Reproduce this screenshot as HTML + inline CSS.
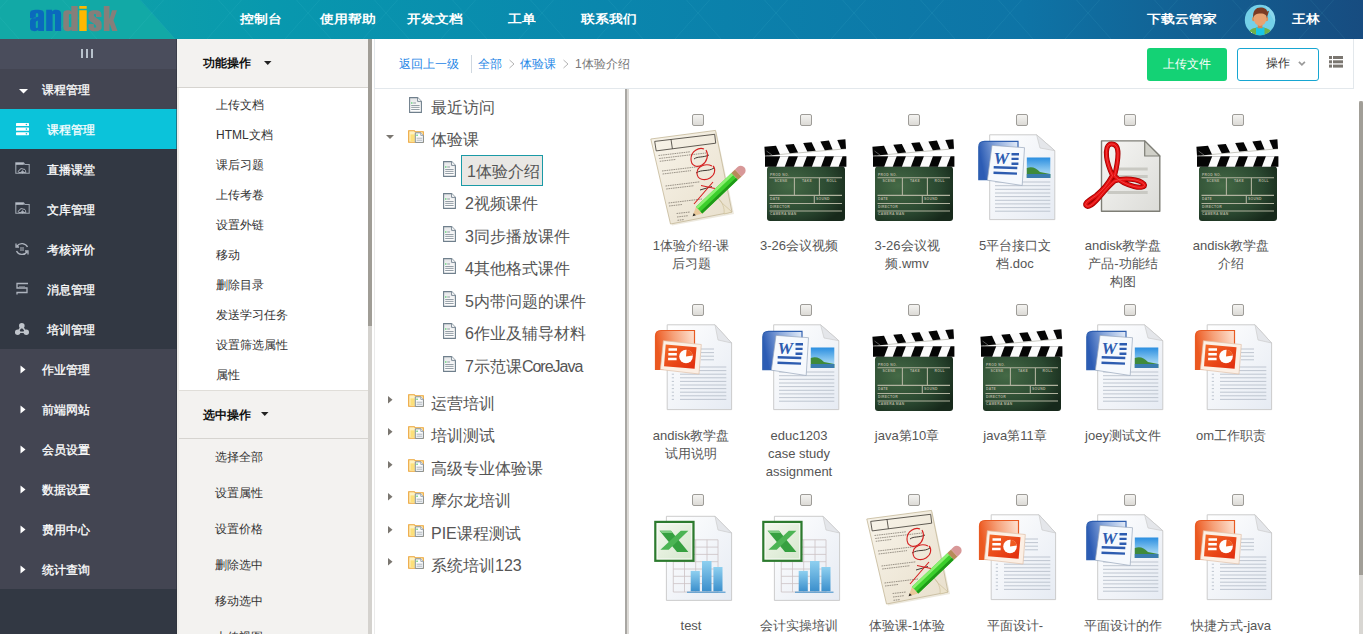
<!DOCTYPE html>
<html><head><meta charset="utf-8">
<style>
*{box-sizing:border-box;margin:0;padding:0}
html,body{width:1363px;height:634px;overflow:hidden;background:#fff;font-family:"Liberation Sans",sans-serif;}
.a{position:absolute}
#hdr{left:0;top:0;width:1363px;height:39px;background:linear-gradient(90deg,#12a6a6 0%,#0898ae 20%,#0a86ad 45%,#0e74a6 75%,#174c80 100%);overflow:hidden}
.nav{position:absolute;top:10px;color:#fff;font-size:14px;font-weight:bold;line-height:18px;white-space:nowrap;transform:scaleY(0.87);transform-origin:50% 50%}
#logo{left:29px;top:0px;font-size:33px;font-weight:bold;letter-spacing:-1px;line-height:39px}
#side{left:0;top:39px;width:177px;height:595px;background:#323843}
.srow{position:absolute;left:0;width:177px;height:40px;color:#fff;font-size:12px;line-height:42px;white-space:nowrap;-webkit-text-stroke:0.3px #fff}
.grp{background:#434552}
#ops{left:177px;top:39px;width:191px;height:595px;background:#fff}
.oph{position:absolute;left:0;width:191px;background:#f3f2f0;border-bottom:1px solid #d6d4d0;font-size:12px;font-weight:bold;color:#111}
.opi{position:absolute;left:39px;font-size:12px;color:#333;white-space:nowrap;line-height:16px}
.tree{position:absolute;font-size:16px;color:#555;white-space:nowrap;line-height:20px}
.ft{position:absolute;font-size:13px;color:#555;text-align:center;line-height:18px;white-space:nowrap;width:100px}
.cb{position:absolute;width:12px;height:12px;border:1px solid #9e9c98;border-radius:2px;background:linear-gradient(#f4f3f1,#dcdad6)}
</style></head><body>
<div id="hdr" class="a">
  <svg class="a" style="left:0;top:0" width="1363" height="39"><path d="M0 0H140L175 39H0Z" fill="#12a9a6"/></svg>
  <svg class="a" style="left:0;top:0" width="1363" height="39"><path d="M-93.5 0L-59.0 39M-70.5 0L-105.0 39M-15.5 0L19.0 39M7.5 0L-27.0 39M62.5 0L97.0 39M85.5 0L51.0 39M140.5 0L175.0 39M163.5 0L129.0 39M218.5 0L253.0 39M241.5 0L207.0 39M296.5 0L331.0 39M319.5 0L285.0 39M374.5 0L409.0 39M397.5 0L363.0 39M452.5 0L487.0 39M475.5 0L441.0 39M530.5 0L565.0 39M553.5 0L519.0 39M608.5 0L643.0 39M631.5 0L597.0 39M686.5 0L721.0 39M709.5 0L675.0 39M764.5 0L799.0 39M787.5 0L753.0 39M842.5 0L877.0 39M865.5 0L831.0 39M920.5 0L955.0 39M943.5 0L909.0 39M998.5 0L1033.0 39M1021.5 0L987.0 39M1076.5 0L1111.0 39M1099.5 0L1065.0 39M1154.5 0L1189.0 39M1177.5 0L1143.0 39M1232.5 0L1267.0 39M1255.5 0L1221.0 39M1310.5 0L1345.0 39M1333.5 0L1299.0 39M1388.5 0L1423.0 39M1411.5 0L1377.0 39" stroke="#7fe0f0" stroke-opacity="0.08" stroke-width="1" fill="none"/></svg>
  <svg class="a" style="left:0;top:0" width="130" height="39" viewBox="0 0 130 39">
    <path fill="#0a69bd" fill-rule="evenodd" d="M30 13.7C30 10.5 32 9.7 37 9.7C42 9.7 44 10.5 44 13.7V31H38.2V29.5C37.5 30.8 36.5 31.2 34.5 31.2C31 31.2 30 29.5 30 26.5V22C30 19.5 31 18.5 34 17.8L38.2 16.8V14.2C38.2 13.5 37.9 13.3 37 13.3C36.1 13.3 35.8 13.5 35.8 14.2V18.2H30Z M35.8 22.5C35.8 21.5 36.5 21 37.9 20.5V27C37.9 27.8 37.5 28 36.8 28C36.1 28 35.8 27.8 35.8 27Z"/>
    <path fill="#0a69bd" d="M46.2 9.7H52V11.5C52.8 10.2 54 9.7 56 9.7C59.5 9.7 61.1 11 61.1 14V31H55V14.5C55 14 54.6 13.9 53.8 13.9C53 13.9 52.6 14 52.6 14.5V31H46.2Z"/>
    <path fill="#857f7a" fill-rule="evenodd" d="M71.3 6.1H77.7V31H71.5V29.5C70.8 30.7 69.8 31.2 68 31.2C64.8 31.2 63.3 30 63.3 27V14C63.3 11 64.8 10.2 68 10.2C69.6 10.2 70.6 10.6 71.3 11.5Z M68.9 14.6C68.9 14.1 69.3 13.9 70.1 13.9C70.9 13.9 71.3 14.1 71.3 14.6V26.6C71.3 27.1 70.9 27.2 70.1 27.2C69.3 27.2 68.9 27.1 68.9 26.6Z"/>
    <path fill="#ffb800" d="M79.3 6.1H86.7V8.7H79.3Z M79.3 10.2H86.7V31H79.3Z"/>
    <path fill="#857f7a" d="M95 10.2C99.8 10.2 101.5 11.8 101.5 15V17H96V14.8C96 14.2 95.6 14 95 14C94.3 14 93.9 14.3 93.9 15C93.9 16 94.5 16.6 96.5 18L99.5 20C101.3 21.3 101.7 22.6 101.7 25V26.5C101.7 29.8 99.8 31.2 95 31.2C90.2 31.2 88.4 29.8 88.4 26.5V24H93.9V26.8C93.9 27.4 94.3 27.6 95 27.6C95.7 27.6 96.2 27.3 96.2 26.7C96.2 25.6 95.5 25 93.5 23.5L90.5 21.5C88.8 20.2 88.4 19 88.4 16.5V15C88.4 11.8 90.2 10.2 95 10.2Z"/>
    <path fill="#857f7a" d="M103.8 6.1H109.5V19L112 10.2H117L113.5 20.3L117.5 31H112.2L109.5 23V31H103.8Z"/>
  </svg>
  <div class="nav" style="left:240px">控制台</div>
  <div class="nav" style="left:320px">使用帮助</div>
  <div class="nav" style="left:407px">开发文档</div>
  <div class="nav" style="left:508px">工单</div>
  <div class="nav" style="left:581px">联系我们</div>
  <div class="nav" style="left:1147px">下载云管家</div>
  <svg class="a" style="left:1244px;top:4px" width="32" height="32" viewBox="0 0 32 32">
    <defs><clipPath id="avc"><circle cx="16" cy="16" r="15.2"/></clipPath></defs>
    <circle cx="16" cy="16" r="15.2" fill="#74d0e8"/>
    <g clip-path="url(#avc)">
      <path d="M20 0 L32 0 V20 Z" fill="#9adcf0" opacity="0.6"/>
      <path d="M3.5 32 C4 26 8 23.5 16 23.5 C24 23.5 28 26 28.5 32Z" fill="#6fb04a"/>
      <path d="M12 23.5 H20.5 V32 H12Z" fill="#19c6e6"/>
      <rect x="13.8" y="19" width="4.6" height="5.2" fill="#d48450"/>
      <ellipse cx="9.6" cy="15" rx="1.6" ry="2.2" fill="#d9925e"/>
      <ellipse cx="22.6" cy="15" rx="1.6" ry="2.2" fill="#d9925e"/>
      <ellipse cx="16.1" cy="14.6" rx="6.4" ry="7.4" fill="#e8a271"/>
      <path d="M9.2 14 C8.5 6.5 12 3.3 16.5 3.4 C20.5 3.5 23 5 23.2 7.5 L25 6.8 C24.6 9 23.6 10.5 23 14.5 C22.5 11 21 9.6 16.5 9.6 C12.5 9.6 10.5 10.5 9.2 14Z" fill="#7b3b24"/>
      <circle cx="7.4" cy="28.6" r="0.7" fill="#fff"/><circle cx="7.9" cy="30.9" r="0.7" fill="#fff"/>
    </g>
  </svg>
  <div class="nav" style="left:1292px">王林</div>
</div>

<div id="side" class="a">
  <div class="srow" style="top:0;height:30px;background:#4a4d5c"></div>
  <div class="a" style="left:81px;top:10px;width:2px;height:9px;background:#b8c2cc"></div>
  <div class="a" style="left:86px;top:10px;width:2px;height:9px;background:#b8c2cc"></div>
  <div class="a" style="left:91px;top:10px;width:2px;height:9px;background:#b8c2cc"></div>
  <div class="srow grp" style="top:30px"><svg class="a" style="left:19px;top:20px" width="9" height="5"><path d="M0 0H9L4.5 4.5Z" fill="#fff"/></svg><span style="position:absolute;left:42px">课程管理</span></div>
  <div class="srow" style="top:70px;background:#0bc3da"><svg class="a" style="left:15px;top:13px" width="15" height="14"><g fill="#fff"><rect x="1" y="1" width="13" height="3" rx="0.6"/><rect x="1" y="5.5" width="13" height="3.3" rx="0.6"/><rect x="1" y="10.2" width="13" height="3" rx="0.6"/></g><g fill="#0bc3da"><circle cx="11.4" cy="2.5" r="0.8"/><circle cx="11.4" cy="7.1" r="0.8"/><circle cx="11.4" cy="11.7" r="0.8"/></g></svg><span style="position:absolute;left:47px">课程管理</span></div>
  <div class="srow" style="top:110px"><svg class="a" style="left:15px;top:13px" width="15" height="13"><path d="M0.8 0.8H8.5L10 2.5H14.2V11.2H0.8Z" fill="none" stroke="#9ea5b0" stroke-width="1.1"/><rect x="0.8" y="0.8" width="8" height="2" fill="#b8bec8"/><path d="M4 10.5 C3 10.5 3 8.2 4.6 8.2 C4.8 6.6 7 6 8 7.2 C9.6 6.8 11 8 10.4 9.5 C11.6 9.7 11.3 10.5 10.6 10.5Z" fill="none" stroke="#b4bac4" stroke-width="0.9"/><path d="M7.5 11.5V8.8M6.2 10L7.5 8.6L8.8 10" fill="none" stroke="#b4bac4" stroke-width="0.8"/></svg><span style="position:absolute;left:47px">直播课堂</span></div>
  <div class="srow" style="top:150px"><svg class="a" style="left:15px;top:13px" width="15" height="13"><path d="M0.8 0.8H8.5L10 2.5H14.2V11.2H0.8Z" fill="none" stroke="#9ea5b0" stroke-width="1.1"/><rect x="0.8" y="0.8" width="8" height="2" fill="#b8bec8"/><path d="M4 10.5 C3 10.5 3 8.2 4.6 8.2 C4.8 6.6 7 6 8 7.2 C9.6 6.8 11 8 10.4 9.5 C11.6 9.7 11.3 10.5 10.6 10.5Z" fill="none" stroke="#b4bac4" stroke-width="0.9"/><path d="M7.5 11.5V8.8M6.2 10L7.5 8.6L8.8 10" fill="none" stroke="#b4bac4" stroke-width="0.8"/></svg><span style="position:absolute;left:47px">文库管理</span></div>
  <div class="srow" style="top:190px"><svg class="a" style="left:15px;top:13px" width="14" height="14"><path d="M2 4A6 5.5 0 0 1 12.5 5M12 10A6 5.5 0 0 1 1.5 9M1 1.5V5H4M13 12.5V9H10" fill="none" stroke="#aeb4be" stroke-width="1.3"/><path d="M5 6H9M5 8H9" stroke="#aeb4be" stroke-width="1"/></svg><span style="position:absolute;left:47px">考核评价</span></div>
  <div class="srow" style="top:230px"><svg class="a" style="left:15px;top:13px" width="14" height="14"><path d="M13 1.5H2V6H12V10.5H2V12.5" fill="none" stroke="#aeb4be" stroke-width="1.3"/><path d="M4.5 4.5H10" stroke="#aeb4be" stroke-width="1" stroke-dasharray="1 1"/></svg><span style="position:absolute;left:47px">消息管理</span></div>
  <div class="srow" style="top:270px"><svg class="a" style="left:15px;top:13px" width="14" height="14"><g fill="#c0c5cc"><circle cx="6.8" cy="3.7" r="2.8"/><circle cx="2.6" cy="10.2" r="2.7"/><circle cx="11.3" cy="10.2" r="2.7"/></g><path d="M6.8 4L2.6 10.2H11.3Z" fill="none" stroke="#c0c5cc" stroke-width="1.5"/></svg><span style="position:absolute;left:47px">培训管理</span></div>
  <div class="srow grp" style="top:310px"><svg class="a" style="left:20px;top:16px" width="6" height="9"><path d="M0.5 0.5V8.5L5.5 4.5Z" fill="#fff"/></svg><span style="position:absolute;left:42px">作业管理</span></div>
  <div class="srow grp" style="top:350px"><svg class="a" style="left:20px;top:16px" width="6" height="9"><path d="M0.5 0.5V8.5L5.5 4.5Z" fill="#fff"/></svg><span style="position:absolute;left:42px">前端网站</span></div>
  <div class="srow grp" style="top:390px"><svg class="a" style="left:20px;top:16px" width="6" height="9"><path d="M0.5 0.5V8.5L5.5 4.5Z" fill="#fff"/></svg><span style="position:absolute;left:42px">会员设置</span></div>
  <div class="srow grp" style="top:430px"><svg class="a" style="left:20px;top:16px" width="6" height="9"><path d="M0.5 0.5V8.5L5.5 4.5Z" fill="#fff"/></svg><span style="position:absolute;left:42px">数据设置</span></div>
  <div class="srow grp" style="top:470px"><svg class="a" style="left:20px;top:16px" width="6" height="9"><path d="M0.5 0.5V8.5L5.5 4.5Z" fill="#fff"/></svg><span style="position:absolute;left:42px">费用中心</span></div>
  <div class="srow grp" style="top:510px"><svg class="a" style="left:20px;top:16px" width="6" height="9"><path d="M0.5 0.5V8.5L5.5 4.5Z" fill="#fff"/></svg><span style="position:absolute;left:42px">统计查询</span></div>
</div>

<div id="ops" class="a">
  <div class="oph" style="top:0;height:49px"><span style="position:absolute;left:26px;top:16px">功能操作</span><svg class="a" style="left:87px;top:22px" width="8" height="5"><path d="M0 0H7.5L3.75 4Z" fill="#222"/></svg></div>
  <div class="opi" style="top:58px">上传文档</div>
  <div class="opi" style="top:88px">HTML文档</div>
  <div class="opi" style="top:118px">课后习题</div>
  <div class="opi" style="top:148px">上传考卷</div>
  <div class="opi" style="top:178px">设置外链</div>
  <div class="opi" style="top:208px">移动</div>
  <div class="opi" style="top:238px">删除目录</div>
  <div class="opi" style="top:268px">发送学习任务</div>
  <div class="opi" style="top:298px">设置筛选属性</div>
  <div class="opi" style="top:328px">属性</div>
  <div class="oph" style="top:351px;height:49px;border-top:1px solid #e0ded9"><span style="position:absolute;left:26px;top:16px">选中操作</span><svg class="a" style="left:84px;top:21px" width="8" height="5"><path d="M0 0H7.5L3.75 4Z" fill="#222"/></svg></div>
  <div class="a" style="left:0;top:400px;width:191px;height:195px;background:#f3f2f0"></div>
  <div class="opi" style="top:410px;left:38px">选择全部</div>
  <div class="opi" style="top:446px;left:38px">设置属性</div>
  <div class="opi" style="top:482px;left:38px">设置价格</div>
  <div class="opi" style="top:518px;left:38px">删除选中</div>
  <div class="opi" style="top:554px;left:38px">移动选中</div>
  <div class="opi" style="top:590px;left:38px">上传视图</div>
</div>
<div class="a" style="left:177px;top:88px;width:2px;height:546px;background:#eeece8"></div>
<div class="a" style="left:176px;top:39px;width:1px;height:595px;background:#2c2f3a;opacity:0.5"></div>
<div class="a" style="left:368px;top:39px;width:4px;height:595px;background:#d4d2ce"></div>
<div class="a" style="left:368px;top:39px;width:4px;height:287px;background:#a09d96"></div>

<!-- breadcrumb -->
<div class="a" style="left:374px;top:39px;width:980px;height:50px;border-left:1px solid #e3e8ec;border-right:1px solid #e3e8ec;border-bottom:1px solid #e3e8ec"></div>
<div class="a" style="left:399px;top:56px;font-size:12px;color:#1e86e6;white-space:nowrap">返回上一级</div>
<div class="a" style="left:471px;top:55px;width:1px;height:18px;background:#d0d8e0"></div>
<div class="a" style="left:478px;top:56px;font-size:12px;color:#1e86e6;white-space:nowrap">全部</div>
<svg class="a" style="left:508px;top:59px" width="8" height="10"><path d="M1.5 1L6 5L1.5 9" fill="none" stroke="#b4b4b4" stroke-width="1"/></svg>
<svg class="a" style="left:562px;top:59px" width="8" height="10"><path d="M1.5 1L6 5L1.5 9" fill="none" stroke="#b4b4b4" stroke-width="1"/></svg>
<div class="a" style="left:520px;top:56px;font-size:12px;color:#1e86e6;white-space:nowrap">体验课</div>
<div class="a" style="left:575px;top:56px;font-size:12px;color:#777;white-space:nowrap">1体验介绍</div>

<div class="a" style="left:1147px;top:48px;width:80px;height:33px;background:#14d275;border-radius:3px;color:#fff;font-size:12px;line-height:33px;text-align:center">上传文件</div>
<div class="a" style="left:1237px;top:48px;width:82px;height:33px;border:1px solid #17a6d2;border-radius:3px;color:#333;font-size:12px;line-height:29px"><span style="position:absolute;left:28px">操作</span><svg class="a" style="left:60px;top:12px" width="8" height="6"><path d="M0.9 0.9L3.9 3.9L6.9 0.9" fill="none" stroke="#999" stroke-width="1.7"/></svg></div>
<svg class="a" style="left:1329px;top:56px" width="14" height="12"><g fill="#7a7670"><rect x="0" y="0" width="3" height="3"/><rect x="4" y="0" width="10" height="3"/><rect x="0" y="4.3" width="3" height="3"/><rect x="4" y="4.3" width="10" height="3"/><rect x="0" y="8.6" width="3" height="3"/><rect x="4" y="8.6" width="10" height="3"/></g></svg>

<!-- tree -->
<svg width="0" height="0" style="position:absolute"><defs>
<linearGradient id="gTd" x1="0" y1="0" x2="0" y2="1"><stop offset="0" stop-color="#e2e4e6"/><stop offset="0.5" stop-color="#f8f8f8"/><stop offset="1" stop-color="#ffffff"/></linearGradient>
<symbol id="tdoc" viewBox="0 0 13 16"><path d="M0.6 0.6H8.6L12.4 4.4V15.4H0.6Z" fill="url(#gTd)" stroke="#6f7f8c" stroke-width="1.1"/><path d="M8.6 0.6V4.4H12.4" fill="#fff" stroke="#6f7f8c" stroke-width="0.9"/><rect x="2.2" y="5.4" width="1.2" height="1.2" fill="#22c040"/><path d="M4.2 6H7M2.2 8.5H10.6M2.2 10.4H10.6M2.2 12.5H10.6" stroke="#7b8892" stroke-width="0.8"/></symbol>
<symbol id="tfold" viewBox="0 0 16 13"><path d="M0.7 0.7H6.3L7.3 1.8H15.3V12.3H0.7Z" fill="#fff2c0" stroke="#eba236" stroke-width="1.1"/><rect x="2.5" y="4.4" width="4.2" height="7" fill="#fde07a"/><path d="M7.3 2.8H12.8L15.4 5.4V12.4H7.3Z" fill="#fbfcfd" stroke="#75838f" stroke-width="0.9"/><path d="M12.8 2.8V5.4H15.4" fill="#fff" stroke="#75838f" stroke-width="0.7"/><rect x="8.5" y="4.6" width="1.1" height="1.3" fill="#22c040"/><path d="M8.6 8.2H14.2M8.6 10.2H14.2" stroke="#8a969e" stroke-width="0.7"/></symbol>
</defs></svg>

<svg class="a" style="left:409px;top:97px" width="13" height="16"><use href="#tdoc"/></svg>
<svg class="a" style="left:408px;top:130px" width="16" height="13"><use href="#tfold"/></svg>
<svg class="a" style="left:386px;top:135px" width="8" height="5"><path d="M0 0H8L4 4Z" fill="#7a7670"/></svg>
<svg class="a" style="left:443px;top:161px" width="13" height="16"><use href="#tdoc"/></svg>
<svg class="a" style="left:443px;top:193px" width="13" height="16"><use href="#tdoc"/></svg>
<svg class="a" style="left:443px;top:226px" width="13" height="16"><use href="#tdoc"/></svg>
<svg class="a" style="left:443px;top:258px" width="13" height="16"><use href="#tdoc"/></svg>
<svg class="a" style="left:443px;top:291px" width="13" height="16"><use href="#tdoc"/></svg>
<svg class="a" style="left:443px;top:323px" width="13" height="16"><use href="#tdoc"/></svg>
<svg class="a" style="left:443px;top:356px" width="13" height="16"><use href="#tdoc"/></svg>
<svg class="a" style="left:408px;top:394px" width="16" height="13"><use href="#tfold"/></svg>
<svg class="a" style="left:388px;top:396px" width="5" height="8"><path d="M0 0V7.5L4.5 3.75Z" fill="#7a7670"/></svg>
<svg class="a" style="left:408px;top:426px" width="16" height="13"><use href="#tfold"/></svg>
<svg class="a" style="left:388px;top:428px" width="5" height="8"><path d="M0 0V7.5L4.5 3.75Z" fill="#7a7670"/></svg>
<svg class="a" style="left:408px;top:459px" width="16" height="13"><use href="#tfold"/></svg>
<svg class="a" style="left:388px;top:461px" width="5" height="8"><path d="M0 0V7.5L4.5 3.75Z" fill="#7a7670"/></svg>
<svg class="a" style="left:408px;top:491px" width="16" height="13"><use href="#tfold"/></svg>
<svg class="a" style="left:388px;top:493px" width="5" height="8"><path d="M0 0V7.5L4.5 3.75Z" fill="#7a7670"/></svg>
<svg class="a" style="left:408px;top:524px" width="16" height="13"><use href="#tfold"/></svg>
<svg class="a" style="left:388px;top:526px" width="5" height="8"><path d="M0 0V7.5L4.5 3.75Z" fill="#7a7670"/></svg>
<svg class="a" style="left:408px;top:556px" width="16" height="13"><use href="#tfold"/></svg>
<svg class="a" style="left:388px;top:558px" width="5" height="8"><path d="M0 0V7.5L4.5 3.75Z" fill="#7a7670"/></svg>
<div class="tree" style="left:431px;top:98px">最近访问</div>
<div class="tree" style="left:431px;top:130px">体验课</div>
<div class="a" style="left:461px;top:155px;width:82px;height:31px;border:1px solid #1a9aa6;background:#e9e7e4"></div>
<div class="tree" style="left:467px;top:162px">1体验介绍</div>
<div class="tree" style="left:465px;top:194px">2视频课件</div>
<div class="tree" style="left:465px;top:227px">3同步播放课件</div>
<div class="tree" style="left:465px;top:259px">4其他格式课件</div>
<div class="tree" style="left:465px;top:292px">5内带问题的课件</div>
<div class="tree" style="left:465px;top:324px">6作业及辅导材料</div>
<div class="tree" style="left:465px;top:357px">7示范课<span style="letter-spacing:-1px">CoreJava</span></div>
<div class="tree" style="left:431px;top:394px">运营培训</div>
<div class="tree" style="left:431px;top:426px">培训测试</div>
<div class="tree" style="left:431px;top:459px">高级专业体验课</div>
<div class="tree" style="left:431px;top:491px">摩尔龙培训</div>
<div class="tree" style="left:431px;top:524px">PIE课程测试</div>
<div class="tree" style="left:431px;top:556px">系统培训123</div>

<div class="a" style="left:374px;top:89px;width:1px;height:545px;background:#ebebeb"></div>
<div class="a" style="left:625px;top:89px;width:2px;height:545px;background:#a9a7a3"></div>
<div class="a" style="left:627px;top:89px;width:2px;height:545px;background:#dcdad6"></div>
<div class="a" style="left:1359px;top:101px;width:4px;height:533px;background:#d8d6d2"></div>
<div class="a" style="left:1359px;top:101px;width:4px;height:474px;background:#a19e97;border-radius:2px 2px 0 0"></div>

<svg width="0" height="0" style="position:absolute">
<defs>
<linearGradient id="gPage" x1="0" y1="0" x2="1" y2="1"><stop offset="0" stop-color="#ffffff"/><stop offset="1" stop-color="#e6ebf3"/></linearGradient>
<linearGradient id="gBlue" x1="0" y1="0.2" x2="1" y2="0"><stop offset="0" stop-color="#2c5cb4"/><stop offset="0.45" stop-color="#8aa8dc"/><stop offset="1" stop-color="#e4ecf8"/></linearGradient>
<linearGradient id="gOr" x1="0" y1="0.2" x2="1" y2="0"><stop offset="0" stop-color="#ec5820"/><stop offset="0.45" stop-color="#f6a078"/><stop offset="1" stop-color="#fde4d4"/></linearGradient>
<linearGradient id="gOrIn" x1="0" y1="0" x2="1" y2="1"><stop offset="0" stop-color="#f46a28"/><stop offset="1" stop-color="#e02a0c"/></linearGradient>
<linearGradient id="gSky" x1="0" y1="0" x2="0" y2="1"><stop offset="0" stop-color="#2a8ee0"/><stop offset="1" stop-color="#c8ecfa"/></linearGradient>
<linearGradient id="gBar" x1="0" y1="0" x2="0" y2="1"><stop offset="0" stop-color="#8fd0f0"/><stop offset="1" stop-color="#3b8fcc"/></linearGradient>
<linearGradient id="gXl" x1="0" y1="0" x2="1" y2="1"><stop offset="0" stop-color="#f4f8ee"/><stop offset="1" stop-color="#d4e6cc"/></linearGradient>
<linearGradient id="gPdf" x1="0" y1="0" x2="1" y2="1"><stop offset="0" stop-color="#f6f6f4"/><stop offset="1" stop-color="#dcdcd8"/></linearGradient>
<radialGradient id="gBoard" cx="0.3" cy="0.35" r="0.8"><stop offset="0" stop-color="#456a46"/><stop offset="0.65" stop-color="#2a4830"/><stop offset="1" stop-color="#17291b"/></radialGradient>
<linearGradient id="gPaper" x1="0" y1="0" x2="1" y2="1"><stop offset="0" stop-color="#f8f4ea"/><stop offset="1" stop-color="#e8dfcc"/></linearGradient>

<symbol id="i-clap" viewBox="0 0 96 96">
  <rect x="13" y="38.5" width="78" height="54.5" rx="3" fill="url(#gBoard)"/>
  <g stroke="#b0b29e" stroke-width="1.1" fill="none">
    <path d="M15.5 49.7H88M15.5 67.4H88M15.5 75.5H88M15.5 83H88M40.4 49.7V67.4M65.4 49.7V67.4M60.3 67.4V75.5"/>
  </g>
  <g fill="#aeb09c" font-family="Liberation Sans" font-size="3.4" font-weight="bold" letter-spacing="0.3">
    <text x="16" y="47.5">PROD NO.</text><text x="20.5" y="54">SCENE</text><text x="48" y="54">TAKE</text><text x="72.5" y="54">ROLL</text>
    <text x="16" y="71.8">DATE</text><text x="62" y="71.8">SOUND</text><text x="16" y="79.6">DIRECTOR</text><text x="16" y="87.3">CAMERA MAN</text>
  </g>
  <path d="M11 28.3 H92.4 V38.7 H11Z" fill="#050505"/>
  <g fill="#fbfbfb">
    <path d="M22.2 38.7 L26.2 28.3 H34.7 L30.7 38.7Z"/><path d="M39.9 38.7 L43.9 28.3 H52.9 L48.9 38.7Z"/><path d="M57.9 38.7 L61.9 28.3 H71 L67 38.7Z"/><path d="M75.9 38.7 L79.9 28.3 H88.6 L84.6 38.7Z"/>
  </g>
  <path d="M10.4 18.8 L91.4 11.4 L92 20.8 L11 27.8Z" fill="#fbfbfb"/>
  <path d="M14 27.5 L92 20.8" stroke="#c8c8c0" stroke-width="1"/>
  <g fill="#050505">
    <path d="M10.4 18.8 L22 17.8 L26 26.5 L11 27.8Z"/>
    <path d="M31.3 16.8 L39.8 16 L44.1 24.4 L35.7 25.2Z"/>
    <path d="M49.2 15.1 L57.6 14.3 L61.7 22.7 L53.3 23.5Z"/>
    <path d="M66.4 13.4 L74.9 12.6 L78.6 21.4 L70.8 22.2Z"/>
    <path d="M83.3 12 L91.4 11.3 L92 20.8 L87 21.1Z"/>
  </g>
  <path d="M12.5 23 L18 27" stroke="#555" stroke-width="1"/>
</symbol>

<symbol id="i-exam" viewBox="0 0 96 96" overflow="visible">
  <path d="M6 12.5 L70.5 4 L88 86 L26 97.5Z" fill="#d8ceb6" opacity="0.45"/>
  <path d="M4.8 11 L69.5 2.4 L86 84 L24.5 96Z" fill="url(#gPaper)" stroke="#c4b898" stroke-width="0.8"/>
  <path d="M72 70 C76 76 82 80 86 84 L78 86 C79 80 76 74 72 70Z" fill="#ebe2ca" stroke="#c8ba94" stroke-width="0.6"/>
  <path d="M8.7 13.4 L68.7 6.3 L69.7 15.2 L10.2 22.9Z M25 11.4 L26.4 20.8" fill="none" stroke="#3a3630" stroke-width="0.8"/>
  <g stroke="#6a6258" stroke-width="0.8" stroke-dasharray="1.6 0.7" opacity="0.8">
    <path d="M12.5 27.5 L44 23.8 M13.2 30.5 L60 25 M13.8 33.3 L30 31.4"/>
    <path d="M16 43 L54 38.5 M16.6 46 L45 42.6"/>
    <path d="M19.5 58 L54 53.8 M20.2 61 L48 57.7"/>
    <path d="M22.5 75 L56 71 M23 78 L36 76.5"/>
    <path d="M30.6 85.5 L44 84 M31 89 L42 87.7 M31.5 92.3 L38 91.6"/>
  </g>
  <g stroke="#403a34" stroke-width="1" fill="none">
    <path d="M48 31 C52 28 56 30 63 27"/><path d="M50 45 C56 41 62 44 68 40"/><path d="M54 62 L66 58.5"/>
  </g>
  <g fill="none" stroke="#d42020" stroke-width="1.1">
    <path d="M58 21 C53 19 45 23 45 31 C45 38 51 40 56 37 C61 34 63 27 60 22"/>
    <path d="M66 38 C60 35 51 38 51 45 C51 52 59 53 64 50 C69 47 70 41 67 38"/>
    <path d="M55 57.5 L69 60.5 M67 54 L48 76"/>
  </g>
  <g transform="translate(46.6,88.3) rotate(-43.5)">
    <path d="M0 0 L9 -4.6 V4.6Z" fill="#e9c89a"/>
    <path d="M0 0 L3 -1.5 V1.5Z" fill="#222"/>
    <rect x="9" y="-4.6" width="49" height="9.2" fill="#3ccf2c"/>
    <rect x="9" y="-4.6" width="49" height="2.8" fill="#8af070"/>
    <rect x="9" y="2" width="49" height="2.6" fill="#1f9a18"/>
    <rect x="58" y="-4.8" width="5" height="9.6" fill="#b88a5a"/>
    <path d="M63 -4.8 H66.5 A4.8 4.8 0 0 1 66.5 4.8 H63Z" fill="#d89898"/>
  </g>
</symbol>

<symbol id="i-word" viewBox="0 0 96 96">
  <path d="M19.7 6.8 H66.6 L84.8 22.7 V91.6 H19.7Z" fill="url(#gPage)" stroke="#c6c6c6" stroke-width="0.9"/>
  <path d="M66.6 6.8 L70 20 L84.8 22.7Z" fill="#e4e6ea" stroke="#c6c6c6" stroke-width="0.6"/>
  <g stroke="#b9c1cc" stroke-width="0.9"><path d="M25 54H80.3M25 57.7H80.3M25 61.3H80.3M25 65H80.3M25 68.6H80.3M25 72.3H80.3M25 75.9H80.3M25 79.6H80.3M25 83.2H80.3"/></g>
  <rect x="56.8" y="29.5" width="23.5" height="20.5" fill="url(#gSky)"/>
  <path d="M56.8 40 C62 38 66 40 70 44 L80.3 46 V50 H56.8Z" fill="#3f8a3a"/>
  <path d="M56.8 46 H80.3 V50 H56.8Z" fill="#3a7cae"/>
  <path d="M8.8 19 Q8.8 13.4 14.5 13.4 H48 V51.7 H8.8Z" fill="url(#gBlue)" stroke="#2f5fb0" stroke-width="1.2"/>
  <path d="M22 17.4 L54.5 19.7 L52.2 57.5 L17.4 52.2Z" fill="#f6f9fd" stroke="#9aa8bc" stroke-width="0.7"/>
  <text x="23.6" y="35.8" font-family="Liberation Serif" font-style="italic" font-weight="bold" font-size="17.5" fill="#2d5cb0">W</text>
  <g stroke="#2d5cb0" stroke-width="2.4"><path d="M41.5 26.2H49M41.5 30.9H48.6M41.5 35.7H48.4M23.7 39.2L47.3 40M23.5 44.7L47 45.6"/></g>
</symbol>

<symbol id="i-ppt" viewBox="0 0 96 96">
  <path d="M21.2 6.8 H69 L85.6 25 V91.6 H21.2Z" fill="url(#gPage)" stroke="#c6c6c6" stroke-width="0.9"/>
  <path d="M69 6.8 L72 22 L85.6 25Z" fill="#e4e6ea" stroke="#c6c6c6" stroke-width="0.6"/>
  <g stroke="#b9c1cc" stroke-width="0.9"><path d="M55 31H68M55 34.6H68M55 38.2H68M55 41.8H68M34 49H80.3M34 52.6H80.3M34 56.2H80.3M34 59.8H80.3M34 63.4H80.3M34 67H80.3M34 70.6H80.3M34 74.2H80.3M34 77.8H80.3M34 81.4H80.3"/>
  <path d="M25.8 56.2H28M25.8 59.8H28M25.8 63.4H28M25.8 67H28M25.8 70.6H28M25.8 74.2H28M25.8 77.8H28M25.8 81.4H28"/></g>
  <path d="M9.5 18 Q9.5 12.5 15 12.5 H48.5 V51.5 H9.5Z" fill="url(#gOr)" stroke="#e85a22" stroke-width="1.2"/>
  <path d="M17.4 22.7 L55.3 26.5 L53 56 L14.4 51.5Z" fill="#fcefe4" stroke="#e0c0a8" stroke-width="0.7"/>
  <path d="M19.7 26.5 L50.5 29.2 L48.6 50.8 L18 48.2Z" fill="url(#gOrIn)"/>
  <g stroke="#fff" stroke-width="2.4"><path d="M22.5 31.5H31M22.3 36.3H30.8M22.1 41H30.6"/></g>
  <circle cx="40" cy="38.5" r="6.8" fill="#fff"/>
  <path d="M40 38.5 L40.6 31.8 A6.8 6.8 0 0 1 46.6 37.4Z" fill="#f05a20"/>
</symbol>

<symbol id="i-xls" viewBox="0 0 96 96">
  <path d="M20.4 8.3 H69 L85.6 25 V92.4 H20.4Z" fill="url(#gPage)" stroke="#c6c6c6" stroke-width="0.9"/>
  <path d="M69 8.3 L72 22 L85.6 25Z" fill="#e4e6ea" stroke="#c6c6c6" stroke-width="0.6"/>
  <g stroke="#cbc2c4" stroke-width="0.8" fill="none"><path d="M27.3 31.8H72M27.3 39.1H72M27.3 46.4H72M27.3 53.7H72M27.3 61H72M27.3 68.3H72M27.3 75.6H72M27.3 84H72M27.3 31.8V84M38.5 31.8V84M49.7 31.8V84M61 31.8V84M72 31.8V84"/></g>
  <rect x="44.7" y="62.9" width="9.1" height="20.4" fill="url(#gBar)"/>
  <rect x="56" y="53" width="9.5" height="30.3" fill="url(#gBar)"/>
  <rect x="67.4" y="59" width="9.1" height="24.3" fill="url(#gBar)"/>
  <path d="M41 84.2H79.5" stroke="#3a8cc8" stroke-width="1"/>
  <rect x="9.3" y="13.9" width="38.2" height="38.9" fill="url(#gXl)" stroke="#2c7a2e" stroke-width="2.2"/>
  <rect x="11.3" y="15.9" width="34.2" height="34.9" fill="none" stroke="#ffffff" stroke-opacity="0.7" stroke-width="0.8"/>
  <path d="M13.6 22.7 H25 L42.4 44 H31Z" fill="#36a040"/>
  <path d="M34.8 22.7 H42.4 L22.7 41.7 H14.4Z" fill="#4cb454"/>
  <path d="M13.6 22.7 H25 L27 25 H16Z" fill="#7ccc80"/>
  </symbol>

<symbol id="i-pdf" viewBox="0 0 96 96">
  <path d="M23.5 12.9 H66.7 L81.8 28 V83.3 H23.5Z" fill="url(#gPdf)" stroke="#7e7e76" stroke-width="1.4" stroke-linejoin="round"/>
  <path d="M66.7 12.9 V28 H81.8Z" fill="#d0d0c8" stroke="#7e7e76" stroke-width="1.2" stroke-linejoin="round"/>
  <g stroke="#c9c9c3" stroke-width="3"><path d="M36.4 41H69.7M36.4 48.5H69.7M29.5 64.4H69.7"/></g>
  <g fill="none" stroke-linejoin="round"><path d="M33.5 16 C29 16 27.8 22 28.6 29 C29.4 36 32 42 34.5 47.5 C30.5 55 25 62 18 67.5 C10 73 6.5 75 8 77.5 C10 80 15 76.5 21 69.5 C27 62.5 31 57.5 36.5 53 C46 49.5 61 51 66 56 C68.5 59.5 62 60 56 58.5 C48 56.5 41 52.5 36.5 48 C38.5 40 40 33 40 25.5 C40 19.5 38 16 33.5 16Z" stroke="#a00000" stroke-width="5"/><path d="M33.5 16 C29 16 27.8 22 28.6 29 C29.4 36 32 42 34.5 47.5 C30.5 55 25 62 18 67.5 C10 73 6.5 75 8 77.5 C10 80 15 76.5 21 69.5 C27 62.5 31 57.5 36.5 53 C46 49.5 61 51 66 56 C68.5 59.5 62 60 56 58.5 C48 56.5 41 52.5 36.5 48 C38.5 40 40 33 40 25.5 C40 19.5 38 16 33.5 16Z" stroke="#e61010" stroke-width="3.4"/><path d="M33.5 16 C29 16 27.8 22 28.6 29 C29.4 36 32 42 34.5 47.5 C30.5 55 25 62 18 67.5 C10 73 6.5 75 8 77.5 C10 80 15 76.5 21 69.5 C27 62.5 31 57.5 36.5 53 C46 49.5 61 51 66 56 C68.5 59.5 62 60 56 58.5 C48 56.5 41 52.5 36.5 48 C38.5 40 40 33 40 25.5 C40 19.5 38 16 33.5 16Z" stroke="#ff9090" stroke-width="0.6" opacity="0.6"/></g>
</symbol>
</defs>
</svg>

<div class="cb" style="left:692px;top:114px"></div>
<svg class="a" style="left:646px;top:128px;overflow:visible" width="96" height="96"><use href="#i-exam"/></svg>
<div class="ft" style="left:641px;top:237px">1体验介绍-课<br>后习题</div>
<div class="cb" style="left:800px;top:114px"></div>
<svg class="a" style="left:754px;top:128px;overflow:visible" width="96" height="96"><use href="#i-clap"/></svg>
<div class="ft" style="left:749px;top:237px">3-26会议视频</div>
<div class="cb" style="left:908px;top:114px"></div>
<svg class="a" style="left:862px;top:128px;overflow:visible" width="96" height="96"><use href="#i-clap"/></svg>
<div class="ft" style="left:857px;top:237px">3-26会议视<br>频.wmv</div>
<div class="cb" style="left:1016px;top:114px"></div>
<svg class="a" style="left:970px;top:128px;overflow:visible" width="96" height="96"><use href="#i-word"/></svg>
<div class="ft" style="left:965px;top:237px">5平台接口文<br>档.doc</div>
<div class="cb" style="left:1124px;top:114px"></div>
<svg class="a" style="left:1078px;top:128px;overflow:visible" width="96" height="96"><use href="#i-pdf"/></svg>
<div class="ft" style="left:1073px;top:237px">andisk教学盘<br>产品-功能结<br>构图</div>
<div class="cb" style="left:1232px;top:114px"></div>
<svg class="a" style="left:1186px;top:128px;overflow:visible" width="96" height="96"><use href="#i-clap"/></svg>
<div class="ft" style="left:1181px;top:237px">andisk教学盘<br>介绍</div>
<div class="cb" style="left:692px;top:304px"></div>
<svg class="a" style="left:646px;top:318px;overflow:visible" width="96" height="96"><use href="#i-ppt"/></svg>
<div class="ft" style="left:641px;top:427px">andisk教学盘<br>试用说明</div>
<div class="cb" style="left:800px;top:304px"></div>
<svg class="a" style="left:754px;top:318px;overflow:visible" width="96" height="96"><use href="#i-word"/></svg>
<div class="ft" style="left:749px;top:427px">educ1203<br>case study<br>assignment</div>
<div class="cb" style="left:908px;top:304px"></div>
<svg class="a" style="left:862px;top:318px;overflow:visible" width="96" height="96"><use href="#i-clap"/></svg>
<div class="ft" style="left:857px;top:427px">java第10章</div>
<div class="cb" style="left:1016px;top:304px"></div>
<svg class="a" style="left:970px;top:318px;overflow:visible" width="96" height="96"><use href="#i-clap"/></svg>
<div class="ft" style="left:965px;top:427px">java第11章</div>
<div class="cb" style="left:1124px;top:304px"></div>
<svg class="a" style="left:1078px;top:318px;overflow:visible" width="96" height="96"><use href="#i-word"/></svg>
<div class="ft" style="left:1073px;top:427px">joey测试文件</div>
<div class="cb" style="left:1232px;top:304px"></div>
<svg class="a" style="left:1186px;top:318px;overflow:visible" width="96" height="96"><use href="#i-ppt"/></svg>
<div class="ft" style="left:1181px;top:427px">om工作职责</div>
<div class="cb" style="left:692px;top:494px"></div>
<svg class="a" style="left:646px;top:508px;overflow:visible" width="96" height="96"><use href="#i-xls"/></svg>
<div class="ft" style="left:641px;top:617px">test</div>
<div class="cb" style="left:800px;top:494px"></div>
<svg class="a" style="left:754px;top:508px;overflow:visible" width="96" height="96"><use href="#i-xls"/></svg>
<div class="ft" style="left:749px;top:617px">会计实操培训</div>
<div class="cb" style="left:908px;top:494px"></div>
<svg class="a" style="left:862px;top:508px;overflow:visible" width="96" height="96"><use href="#i-exam"/></svg>
<div class="ft" style="left:857px;top:617px">体验课-1体验</div>
<div class="cb" style="left:1016px;top:494px"></div>
<svg class="a" style="left:970px;top:508px;overflow:visible" width="96" height="96"><use href="#i-ppt"/></svg>
<div class="ft" style="left:965px;top:617px">平面设计-</div>
<div class="cb" style="left:1124px;top:494px"></div>
<svg class="a" style="left:1078px;top:508px;overflow:visible" width="96" height="96"><use href="#i-word"/></svg>
<div class="ft" style="left:1073px;top:617px">平面设计的作</div>
<div class="cb" style="left:1232px;top:494px"></div>
<svg class="a" style="left:1186px;top:508px;overflow:visible" width="96" height="96"><use href="#i-ppt"/></svg>
<div class="ft" style="left:1181px;top:617px">快捷方式-java</div>
</body></html>
